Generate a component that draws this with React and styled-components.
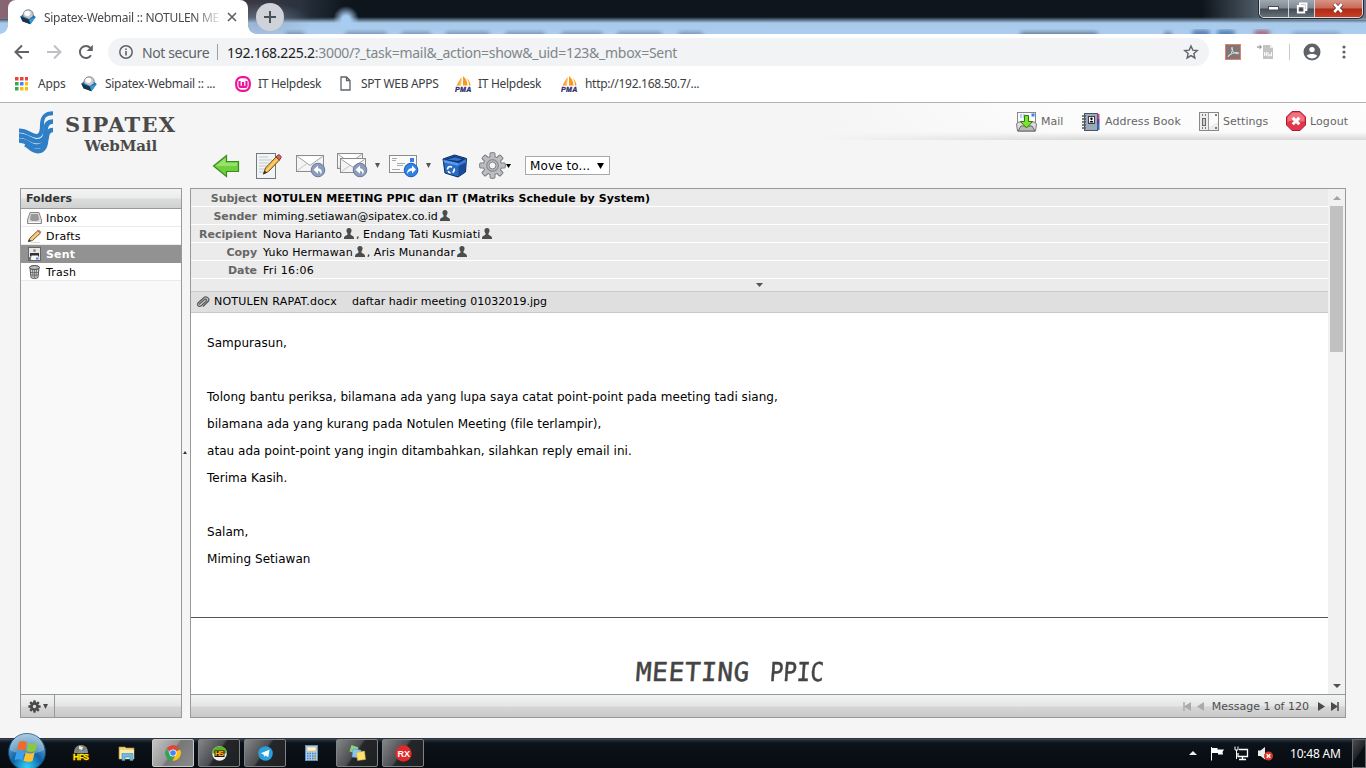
import React from "react";
import styled, { createGlobalStyle, css } from "styled-components";

const ui = `"Noto Sans", "Open Sans", sans-serif`;
const verdana = `"DejaVu Sans", Verdana, sans-serif`;

const Global = createGlobalStyle`
  * { box-sizing: border-box; }
  body { margin: 0; background: #f5f5f5; overflow: hidden; font-family: ${verdana}; font-size: 11px; color: #000; }
`;

const Screen = styled.div`
  width: 1366px;
  height: 768px;
  display: flex;
  flex-direction: column;
  overflow: hidden;
`;

const Text = styled.span`
  white-space: pre;
  letter-spacing: ${(p) => p.$ls || 0}px;
`;

/* ---------- browser chrome ---------- */

const TabStrip = styled.div`
  height: 34px;
  flex: none;
  display: flex;
  position: relative;
  background:
    linear-gradient(to right, transparent 88%, rgba(120, 135, 150, 0.75) 93%, rgba(170, 185, 200, 0.6)) 0 0 / 100% 20px no-repeat,
    radial-gradient(ellipse 13px 14px at 346px 20px, #a9cdf2 30%, transparent),
    radial-gradient(ellipse 50px 20px at 262px 22px, rgba(140, 160, 185, 0.6), transparent),
    linear-gradient(to right, rgba(150, 110, 125, 0.9) 0, rgba(100, 85, 98, 0.55) 240px, rgba(60, 70, 85, 0.6) 300px, transparent 345px) 0 0 / 100% 19px no-repeat,
    linear-gradient(#0f161d 0, #0d151c 17px, #5d7388 20px, #a8c9ea 23px, #abcdef 34px);
`;

const GlassBlur = styled.div`
  position: absolute;
  left: 270px;
  right: 0;
  bottom: 0;
  height: 5px;
  overflow: hidden;
`;

const Smudge = styled.i`
  position: absolute;
  left: ${(p) => p.$x - 270}px;
  top: ${(p) => p.$y ?? 3}px;
  width: ${(p) => p.$w}px;
  height: 7px;
  border-radius: 4px;
  opacity: 0.7;
  background: ${(p) => p.$c || "#5f7894"};
  filter: blur(2px);
`;

const Tab = styled.div`
  position: relative;
  width: 240px;
  height: 34px;
  margin-left: 8px;
  background: #fff;
  border-radius: 8px 8px 0 0;
  display: flex;
  align-items: center;
  padding-left: 12px;
  font: 12px ${ui};
  color: #45494d;
  &::before, &::after {
    content: "";
    position: absolute;
    bottom: 0;
    width: 8px;
    height: 8px;
  }
  &::before { left: -8px; background: radial-gradient(circle at 0 0, transparent 7.5px, #fff 8px); }
  &::after { right: -8px; background: radial-gradient(circle at 100% 0, transparent 7.5px, #fff 8px); }
  svg { flex: none; }
`;

const TabTitle = styled.div`
  width: 175px;
  margin: 0 8px 0 8px;
  white-space: nowrap;
  letter-spacing: ${(p) => p.$ls}px;
  mask-image: linear-gradient(to right, #000 150px, transparent 179px);
`;

const NewTab = styled.div`
  width: 28px;
  height: 28px;
  margin: 3px 0 0 8px;
  border-radius: 50%;
  background: #cfd2d8;
  display: flex;
  align-items: center;
  justify-content: center;
`;

const WindowButtons = styled.div`
  position: absolute;
  right: 3px;
  top: -2px;
  height: 20px;
  width: 104px;
  display: flex;
  border: 1px solid #d9dee3;
  border-radius: 0 0 5px 5px;
  box-shadow: 0 0 0 1px #222b35;
  overflow: hidden;
`;

const WinButton = styled.div`
  width: ${(p) => p.$w}px;
  display: flex;
  align-items: center;
  justify-content: center;
  border-right: 1px solid ${(p) => (p.$close ? "transparent" : "#cdd3d8")};
  background: ${(p) => (p.$close ? "linear-gradient(#d9998d 0, #c96a58 9px, #b02a14 10px, #d0432a 20px)" : "linear-gradient(#a3abb3 0, #808991 9px, #424b54 10px, #6f7983 20px)")};
`;

const AddressRow = styled.div`
  height: 36px;
  flex: none;
  background: #fff;
  display: flex;
  align-items: center;
  padding: 0 0 0 14px;
  svg { flex: none; }
`;

const NavIcons = styled.div`
  display: flex;
  gap: 16px;
  width: 94px;
`;

const Omnibox = styled.div`
  width: 1101px;
  height: 28px;
  border-radius: 14px;
  background: #f1f3f4;
  display: flex;
  align-items: center;
  padding: 0 10px 0 11px;
  font: 14px ${ui};
  color: #80868b;
  b { font-weight: 400; color: #202124; }
`;

const NotSecure = styled.span`
  width: 75px;
  margin-left: 9px;
  color: #5f6368;
  letter-spacing: ${(p) => p.$ls}px;
  white-space: nowrap;
`;

const Divider = styled.i`
  width: 1px;
  height: 16px;
  background: ${(p) => p.$c || "#9aa0a6"};
`;

const Url = styled.span`
  flex: 1;
  margin-left: 9px;
  letter-spacing: ${(p) => p.$ls}px;
  white-space: nowrap;
`;

const Extensions = styled.div`
  flex: 1;
  display: flex;
  align-items: center;
  padding-left: 16px;
`;

const Bookmarks = styled.div`
  height: 33px;
  flex: none;
  background: #fff;
  border-bottom: 1px solid #b2b2b2;
  display: flex;
  align-items: center;
  padding: 0 0 5px 13px;
  font: 12px ${ui};
  color: #3c4043;
`;

const Bookmark = styled.div`
  width: ${(p) => p.$w}px;
  display: flex;
  align-items: center;
  gap: ${(p) => p.$gap || 8}px;
  white-space: nowrap;
  letter-spacing: ${(p) => p.$ls || 0}px;
  svg { flex: none; }
`;

/* ---------- webmail ---------- */

const Page = styled.main`
  height: 635px;
  flex: none;
  display: flex;
  flex-direction: column;
  background: #f5f5f5;
`;

const Header = styled.header`
  height: 85px;
  flex: none;
  display: flex;
  background:
    linear-gradient(to right, #f5f5f5 0, rgba(245, 245, 245, 0) 260px) right 0 top 0 / 550px 37px no-repeat,
    linear-gradient(#fdfdfd 0, #fbfbfb 29px, #d9d9d9 37px) right 0 top 0 / 550px 37px no-repeat,
    #f5f5f5;
`;

const Brand = styled.div`
  width: 191px;
  display: flex;
  padding: 7px 0 0 18px;
  gap: 11px;
`;

const BrandText = styled.div`
  display: flex;
  flex-direction: column;
  align-items: center;
  padding-top: 3px;
  font-family: "DejaVu Serif", serif;
  font-weight: 700;
  color: #4a4a4a;
  height: 50px;
`;

const BrandName = styled.div`
  font-size: 21px;
  line-height: 23px;
  letter-spacing: ${(p) => p.$ls}px;
`;

const BrandSub = styled.div`
  font-size: 15px;
  line-height: 20px;
  letter-spacing: -0.1px;
`;

const HeaderMain = styled.div`
  flex: 1;
  display: flex;
  flex-direction: column;
`;

const TaskNav = styled.nav`
  height: 37px;
  display: flex;
  justify-content: flex-end;
  color: #666;
`;

const TaskLink = styled.div`
  width: ${(p) => p.$w}px;
  display: flex;
  align-items: center;
  gap: ${(p) => p.$gap}px;
  letter-spacing: ${(p) => p.$ls || 0}px;
  white-space: nowrap;
`;

const Toolbar = styled.div`
  height: 48px;
  display: flex;
  align-items: center;
  padding: 3px 0 0 21px;
`;

const Tool = styled.div`
  width: ${(p) => p.$w}px;
  height: 30px;
  display: flex;
  align-items: center;
`;

const MoveSelect = styled.div`
  width: 85px;
  height: 19px;
  border: 1px solid #a9a9a9;
  background: #fff;
  display: flex;
  align-items: center;
  justify-content: space-between;
  padding: 0 5px 0 4px;
  white-space: nowrap;
  font-size: 12px;
  letter-spacing: 0.1px;
`;

const Panels = styled.div`
  height: 530px;
  display: flex;
  padding: 0 20px;
`;

const frame = css`
  border: 1px solid #999;
  display: flex;
  flex-direction: column;
`;

const FolderPanel = styled.aside`
  width: 162px;
  ${frame}
  background: #f9f9f9;
`;

const PanelTitle = styled.div`
  height: 20px;
  border-bottom: 1px solid #999;
  background: linear-gradient(#f4f4f4, #eaebeb 9px, #dcdddd 10px, #cfd0d0);
  padding-left: 5px;
  line-height: 19px;
  font-weight: 700;
  color: #333;
  letter-spacing: 0.05px;
`;

const Folder = styled.div`
  height: 18px;
  display: flex;
  align-items: center;
  gap: 4px;
  padding-left: 6px;
  background: ${(p) => (p.$on ? "#929292" : "#fff")};
  border-bottom: 1px solid ${(p) => (p.$on ? "#929292" : "#ebebeb")};
  font-weight: ${(p) => (p.$on ? 700 : 400)};
  color: ${(p) => (p.$on ? "#fff" : "#000")};
  letter-spacing: 0.2px;
  span { padding-top: 2px; }
`;

const Footer = styled.div`
  height: 23px;
  flex: none;
  margin-top: auto;
  border-top: 1px solid #999;
  background: linear-gradient(#f2f3f3, #e4e5e5 11px, #d6d6d6 12px, #c8c8c8);
  display: flex;
  align-items: center;
  justify-content: ${(p) => (p.$end ? "flex-end" : "flex-start")};
  color: #4d4d4d;
  padding-right: ${(p) => (p.$end ? 6 : 0)}px;
`;

const FooterButton = styled.div`
  width: 34px;
  height: 22px;
  border-right: 1px solid #999;
  display: flex;
  align-items: center;
  padding: 1px 0 0 7px;
`;

const Splitter = styled.div`
  width: 8px;
  display: flex;
  align-items: center;
  padding: 0 0 2px 1px;
`;

const MailPanel = styled.section`
  flex: 1;
  ${frame}
  background: #fff;
`;

const MailView = styled.div`
  flex: 1;
  min-height: 0;
  display: flex;
`;

const Message = styled.article`
  flex: 1;
  min-width: 0;
  overflow: hidden;
`;

const HeaderLine = styled.div`
  height: 18px;
  display: flex;
  align-items: center;
  background: #ebebeb;
  border-bottom: 1px solid #fff;
  padding-top: 2px;
  font-weight: ${(p) => (p.$bold ? 700 : 400)};
`;

const HeaderName = styled.div`
  width: 66px;
  margin-right: 6px;
  text-align: right;
  font-weight: 700;
  color: #666;
  letter-spacing: -0.06px;
`;

const HeaderValue = styled.div`
  display: flex;
  align-items: center;
  white-space: pre;
  svg { margin: -3px 2px 0 2px; }
`;

const Expander = styled.div`
  height: 12px;
  background: #ebebeb;
  display: flex;
  align-items: center;
  justify-content: center;
`;

const Attachments = styled.div`
  height: 22px;
  background: #dfdfdf;
  border: 1px solid #c9c9c9;
  border-width: 1px 0;
  display: flex;
  align-items: center;
  padding: 0 0 2px 5px;
  svg { margin: 2px 3px 0 0; }
`;

const Attachment = styled.span`
  width: ${(p) => p.$w}px;
  letter-spacing: ${(p) => p.$ls || 0}px;
  white-space: nowrap;
`;

const MailBody = styled.div`
  height: 305px;
  padding: 17px 16px 0;
  border-bottom: 1px solid #555;
  font-size: 12px;
  p { margin: 0; height: 27px; line-height: 27px; white-space: nowrap; }
`;

const Line = styled.p`
  letter-spacing: 0.04px;
`;

const ScanTitle = styled.div`
  display: flex;
  gap: 20px;
  margin: 37px 0 0 445px;
  font: 26px/34px "DejaVu Sans Mono", monospace;
  color: #444;
  -webkit-text-stroke: 0.5px #444;
  transform: skewX(-4deg);
`;

const ScanWord = styled.span`
  letter-spacing: ${(p) => p.$ls || 0}px;
  transform: scaleX(${(p) => p.$stretch || 1});
  transform-origin: left;
`;

const ScrollBar = styled.div`
  width: 17px;
  background: #f1f1f1;
  display: flex;
  flex-direction: column;
  align-items: center;
`;

const ScrollButton = styled.div`
  height: 17px;
  display: flex;
  align-items: center;
`;

const ScrollThumb = styled.div`
  width: 13px;
  height: 146px;
  background: #c1c1c1;
  margin-bottom: auto;
`;

const Pager = styled.div`
  display: flex;
  align-items: center;
  gap: 6px;
  span { margin: 0 3px 0 2px; }
`;

/* ---------- taskbar ---------- */

const Taskbar = styled.footer`
  height: 30px;
  flex: none;
  position: relative;
  display: flex;
  background: linear-gradient(#0a121a 0, #4a5865 1px, #232d37 2px, #0c1219 5px, #070b12 30px);
`;

const StartOrb = styled.div`
  position: relative;
  width: 58px;
  svg { position: absolute; left: 7px; top: -6px; }
`;

const Slot = styled.div`
  width: 46px;
  height: 30px;
  padding: 1px 2px 2px;
`;

const TaskButton = styled.div`
  width: 42px;
  height: 28px;
  display: flex;
  align-items: center;
  justify-content: center;
  border-radius: 2px;
  ${(p) => p.$state && css`
    border: 1px solid ${p.$state === "active" ? "#c8c8c8" : "#7f8183"};
    background: ${p.$state === "active"
      ? "linear-gradient(125deg, #c4c4c4 0, #989898 45%, #777 50%, #8a8a8a)"
      : "linear-gradient(125deg, #858688 0, #4b4d50 45%, #242629 50%, #1e2022)"};
  `}
`;

const Tray = styled.div`
  margin-left: auto;
  display: flex;
  align-items: center;
  color: #fff;
  font: 12px ${ui};
  svg { flex: none; }
`;

const Clock = styled.div`
  width: 62px;
  letter-spacing: ${(p) => p.$ls}px;
  white-space: nowrap;
`;

const ShowDesktop = styled.div`
  width: 14px;
  height: 29px;
  align-self: flex-end;
  border: 1px solid #64696e;
  background: linear-gradient(125deg, #4b4f54, #1d2125 50%, #0b0e12 52%);
`;

/* ---------- icons ---------- */

const Caret = ({ w = 6, h = 4, c = "#555", up, mr = 0, ml = 0 }) => (
  <svg width={w + ml + mr} height={h} viewBox={`${-ml} 0 ${w + ml + mr} ${h}`}>
    <path d={up ? `M0 ${h}L${w / 2} 0L${w} ${h}Z` : `M0 0H${w}L${w / 2} ${h}Z`} fill={c} />
  </svg>
);

const CubeIcon = () => (
  <svg width="16" height="16" viewBox="0 0 16 16">
    <path d="M.3 7.500L5 4h6l4.700 4-5.200 7.200L2.500 12z" fill="#1a6cab" />
    <path d="M.3 7.500L9 10.500l1.500 4.700L2.500 12.500z" fill="#17354f" />
    <path d="M9 10.500L15.700 8l-5.200 7.200z" fill="#2f9bdc" />
    <path d="M3 7.500C2.500 3.500 5 .8 8.300.8S14 3.500 13 7.500L9 10.300z" fill="#c3c9ce" stroke="#5d676f" strokeWidth=".7" />
    <ellipse cx="7.300" cy="4.300" rx="3" ry="2.600" fill="#fff" />
  </svg>
);

const BackIcon = ({ flip, c = "#5f6368" }) => (
  <svg width="16" height="16" viewBox="0 0 16 16">
    <path
      d={flip ? "M1 8H13.500M8 1.500L14.500 8 8 14.500" : "M15 8H2.500M8 1.500L1.500 8 8 14.500"}
      fill="none" stroke={c} strokeWidth="2"
    />
  </svg>
);

const ReloadIcon = () => (
  <svg width="16" height="16" viewBox="0 0 16 16">
    <path d="M13 11.200A6 6 0 1 1 12.400 4" fill="none" stroke="#5f6368" strokeWidth="2" />
    <path d="M14.800.800V7H8.600z" fill="#5f6368" />
  </svg>
);

const InfoIcon = () => (
  <svg width="14" height="14" viewBox="0 0 14 14">
    <circle cx="7" cy="7" r="6.200" fill="none" stroke="#5f6368" strokeWidth="1.500" />
    <path d="M7 6v4.500M7 3.400v1.600" stroke="#5f6368" strokeWidth="1.600" />
  </svg>
);

const StarIcon = () => (
  <svg width="16" height="16" viewBox="0 0 24 24">
    <path d="M12 3l2.700 6.200 6.700.6-5.100 4.500 1.500 6.600L12 17.400l-5.800 3.500 1.500-6.600-5.100-4.500 6.700-.6z" fill="none" stroke="#5f6368" strokeWidth="2.100" />
  </svg>
);

const PdfIcon = () => (
  <svg width="16" height="16" viewBox="0 0 16 16">
    <rect x=".5" y=".5" width="15" height="15" fill="#7f7775" stroke="#e67f70" />
    <path d="M3 12.500c2.500-1 4.800-4.700 4.600-8.300-.1-1.500-1.300-1.200-1 .4.600 3 3.600 5.500 6.600 5.100 1.200-.3.500-1.500-1-1.300-3.200.2-6 1.400-8.700 3.300z" fill="none" stroke="#ddd" strokeWidth="1" />
  </svg>
);

const DocIcon = () => (
  <svg width="17" height="16" viewBox="0 0 17 16">
    <path d="M6 1h7l3 3v11H6z" fill="#c3c3c3" />
    <path d="M13 1v3h3" fill="#eee" />
    <path d="M0 3h4M2.500 1.200L4.500 3 2.500 4.800" stroke="#777" fill="none" />
    <path d="M7.500 8v4M9.500 8v4M7.500 10h2M11 8v4h1l1-2 1 2h.5V8" stroke="#f7f7f7" fill="none" />
  </svg>
);

const UserIcon = () => (
  <svg width="18" height="18" viewBox="0 0 18 18">
    <circle cx="9" cy="9" r="8.500" fill="#5f6368" />
    <circle cx="9" cy="6.600" r="2.700" fill="#fff" />
    <path d="M3.800 12.800c1-2 8.400-2.600 10.400 0-2 3.400-8.200 3.600-10.400 0z" fill="#fff" />
  </svg>
);

const DotsIcon = () => (
  <svg width="4" height="14" viewBox="0 0 4 14" fill="#5f6368">
    <circle cx="2" cy="2" r="1.600" /><circle cx="2" cy="7" r="1.600" /><circle cx="2" cy="12" r="1.600" />
  </svg>
);

const AppsIcon = () => (
  <svg width="15" height="14" viewBox="0 0 15 14">
    {["#ea4335", "#ea4335", "#ea4335", "#34a853", "#4285f4", "#fbbc05", "#34a853", "#fbbc05", "#fbbc05"].map((c, i) => (
      <rect key={i} x={2 + (i % 3) * 5} y={Math.floor(i / 3) * 5} width="3.500" height="3.500" fill={c} />
    ))}
  </svg>
);

const WampIcon = () => (
  <svg width="16" height="16" viewBox="0 0 16 16">
    <rect x="1.200" y="1.200" width="13.600" height="13.600" rx="5.500" fill="#fff" stroke="#f0149b" strokeWidth="2.200" />
    <path d="M4.500 5v4.500c0 2 3.500 2 3.500 0V6v3.500c0 2 3.500 2 3.500 0V5" fill="none" stroke="#f0149b" strokeWidth="2.200" />
  </svg>
);

const FileIcon = () => (
  <svg width="11" height="15" viewBox="0 0 11 15">
    <path d="M1 1h5.500L10 4.500V14H1zM6.500 1v3.500H10" fill="#fff" stroke="#5f6368" strokeWidth="1.300" />
  </svg>
);

const PmaIcon = () => (
  <svg width="17" height="17" viewBox="0 0 17 17">
    <path d="M6.500 2L1.500 10.500h4.500zM8 1v9.500h4.500C12.500 6 10.500 3 8 1zM11.500 3c1.500 2 2.500 4.500 2.500 7.500h1.500C15.300 7.500 14 5 11.500 3z" fill="#f79a1f" />
    <path d="M6.500 2L3.800 10.500H6z" fill="#fbc069" />
    <text x="0" y="16.500" fontSize="7" fontWeight="700" fontStyle="italic" fontFamily="Liberation Sans" fill="#2c2c6c" stroke="#2c2c6c" strokeWidth=".3" textLength="16">PMA</text>
  </svg>
);

const Logo = () => (
  <svg width="36" height="44" viewBox="0 0 36 44">
    <g fill="none" stroke="#2f7fc6">
      <path strokeWidth="4" d="M1 20.500C10 20.500 13 26 18.500 26C23.500 26 24 21 24 15C24 6.500 27 3.200 35 3.200" />
      <path strokeWidth="4.600" d="M1 25.500C10 25.500 12.500 31.300 18.500 31.300C26 31.300 27.500 27 27.500 21C27.500 14.500 30 11.500 35 11.500" />
      <path strokeWidth="4.600" d="M1 30.500C10 30.500 12 36.500 18.500 36.500C26.500 36.500 28.300 31 28.800 27C29.200 22.500 31.500 20 35 20" />
      <path strokeWidth="4.400" d="M7 34.500C11 36 14 41.200 19.500 41.200C25 41.200 27.500 37 28.200 31" />
    </g>
  </svg>
);

const NavMailIcon = () => (
  <svg width="21" height="22" viewBox="0 0 21 22">
    <rect x="1.500" y="1.500" width="18" height="11" fill="#fafafa" stroke="#888" />
    <path d="M4 4h5M4 6h4" stroke="#7ba5dd" strokeDasharray="2 1" />
    <rect x="15.500" y="2.500" width="3" height="3" fill="#3f7fee" />
    <path d="M.5 13l2-2h16l2 2-1 7h-18z" fill="#ddd" stroke="#777" />
    <path d="M2 20l3-5h11l3 5z" fill="#b9bab8" stroke="#666" />
    <path d="M8.500 4.500h4v6h4L10.500 17l-6-6.500h4z" fill="#7be52d" stroke="#2c7a10" />
  </svg>
);

const BookIcon = () => (
  <svg width="19" height="20" viewBox="0 0 19 20">
    <rect x="3.500" y="1.500" width="13" height="17" fill="#99aabd" stroke="#4a5563" />
    <rect x="16.500" y="2" width="2" height="5" fill="#c7468b" /><rect x="16.500" y="7" width="2" height="5" fill="#6d3aa8" /><rect x="16.500" y="12" width="2" height="6" fill="#3273b8" />
    <rect x="7.500" y="4.500" width="6" height="7" fill="#fff" stroke="#394049" />
    <circle cx="10.500" cy="6.800" r="1.200" /><path d="M8.500 10.500c.5-2.500 3.500-2.500 4 0z" />
    <path d="M1 4h4M1 7h4M1 10h4M1 13h4M1 16h4" stroke="#555" strokeWidth="1.300" />
  </svg>
);

const SwitchIcon = () => (
  <svg width="20" height="19" viewBox="0 0 20 19">
    <rect x=".5" y=".5" width="19" height="18" fill="#ececec" stroke="#888" />
    <path d="M9.500 1v17" stroke="#999" />
    <path d="M10 1h9v9l-9 5z" fill="#fbfbfb" />
    <rect x="3.500" y="6.500" width="3" height="7" fill="#ccc" stroke="#666" />
    <path d="M3 3h1M6 3h1M3 16h1M6 16h1M16 3h2M16 16h2" stroke="#555" strokeWidth="1.500" />
  </svg>
);

const LogoutIcon = () => (
  <svg width="20" height="21" viewBox="0 0 20 21">
    <path d="M6 .5h8L19.500 6v8L14 19.500H6L.5 14V6z" fill="#e0364b" stroke="#a81f31" />
    <path d="M6.500 1.500h7L18.500 6.500V10C13 12 7 8 1.500 11V6.500z" fill="#f0727e" />
    <path d="M6.700 6.700l6.600 6.600M13.300 6.700l-6.600 6.600" stroke="#fff" strokeWidth="3" />
  </svg>
);

const ArrowIcon = () => (
  <svg width="28" height="24" viewBox="0 0 28 24">
    <path d="M1.500 12L14.500 1.500V7.500H26.500V17.500H14.500V22.500z" fill="#6fcf3c" stroke="#3a8b22" strokeWidth="1.200" />
    <path d="M3.500 12L13.500 4v5H25v3z" fill="#98e26c" />
  </svg>
);

const ComposeIcon = () => (
  <svg width="27" height="28" viewBox="0 0 27 28">
    <rect x="1.500" y="1.500" width="19" height="25" fill="#f1f3f5" stroke="#717880" />
    <path d="M4 5h9M4 8h13M4 11h10M4 14h9M4 17h7M4 20h5" stroke="#c3c8cd" />
    <path d="M8.500 22l2-6L21 5l3.500 3L13.500 19.500z" fill="#f7bc43" stroke="#6b5023" />
    <path d="M21 5l2-2c1-1 4 1.500 3 2.700L24.500 8z" fill="#dc6565" stroke="#8b3434" />
    <path d="M8 22.500l1.500-4 2.500 2.300z" fill="#333" />
    <path d="M11 19L22 7.500" stroke="#fde3a0" />
  </svg>
);

const Badge = ({ x, y, fwd }) => (
  <g transform={`translate(${x} ${y})`}>
    <circle cx="7" cy="7" r="6.800" fill={fwd ? "#2f82e4" : "#8b9dbd"} stroke={fwd ? "#1b5cb3" : "#6a7b99"} />
    {fwd
      ? <path d="M3.200 11C2.800 7 5 5.200 8 5.200V2.500L12 6.600 8 10.500V7.800C6 7.700 4.200 8.500 3.200 11z" fill="#fff" />
      : <path d="M9.500 11.500C12 9 10.500 5.500 7 5.200V2.500L2.500 6.800 7 10.800V8C8.800 8 9.800 9.300 9.500 11.500z" fill="#fff" />}
  </g>
);

const Envelope = ({ x, y, w = 27, h = 16 }) => (
  <g transform={`translate(${x} ${y})`}>
    <rect width={w} height={h} fill="#f4f4f4" stroke="#8c8c8c" />
    <path d={`M1 ${h - 1}L${w * 0.38} ${h * 0.5}M${w - 1} ${h - 1}L${w * 0.62} ${h * 0.5}`} stroke="#c5c5c5" />
    <path d={`M1 1L${w / 2} ${h * 0.62}L${w - 1} 1`} fill="#fff" stroke="#a0a0a0" />
  </g>
);

const ReplyIcon = () => (
  <svg width="30" height="24" viewBox="0 0 30 24"><Envelope x={0.5} y={1.5} /><Badge x={15} y={9} /></svg>
);

const ReplyAllIcon = () => (
  <svg width="31" height="25" viewBox="0 0 31 25"><Envelope x={0.5} y={0.5} w={25} h={15} /><Envelope x={3.5} y={5.5} w={25} h={14} /><Badge x={16} y={10} /></svg>
);

const ForwardIcon = () => (
  <svg width="30" height="24" viewBox="0 0 30 24">
    <rect x=".5" y="1.500" width="27" height="17" fill="#fafafa" stroke="#8c8c8c" />
    <path d="M3 4.500h5M3 6.500h4M8 9.500h8M8 11.500h6M3 15.500h8" stroke="#aaa" />
    <rect x="21" y="4" width="4" height="4" fill="#3b7ced" />
    <Badge x={15} y={9} fwd />
  </svg>
);

const BinIcon = () => (
  <svg width="26" height="24" viewBox="0 0 26 24">
    <path d="M1 5L12.500 1 24.500 4.500 23.500 18l-7.500 5L3 19z" fill="#2a6bc4" stroke="#0b2a5c" />
    <path d="M2 5.500L12.500 2l11 3-7 4z" fill="#0d3576" />
    <path d="M5 5.500l8-2.300 7 2-4 1.800z" fill="#3274ca" />
    <path d="M1.500 6L16.500 9.200v2.500L1.800 8.500z" fill="#5b9bea" />
    <path d="M16.500 9.300L24 5.500v3l-7.500 4z" fill="#3b7bd0" />
    <path d="M16.500 12L23.700 8.500 23 17.500l-6.500 4.800z" fill="#18499a" />
    <path d="M5.500 15.500a3 3 0 0 1 3-3l1.500.8M12 14.500a3 3 0 0 1-1.500 4M8.500 19a3 3 0 0 1-2.300-2" fill="none" stroke="#fff" strokeWidth="1.700" />
  </svg>
);

const Gear = ({ s = 27, fill = "#bcbec2", stroke = "#77797d", hole = "#f5f5f5", sw = 1 }) => (
  <svg width={s} height={s} viewBox="-14 -14 28 28">
    {[0, 45, 90, 135].map((a) => (
      <rect key={a} x="-2.600" y="-13.300" width="5.200" height="26.600" rx="1" fill={fill} stroke={stroke} strokeWidth={sw} transform={`rotate(${a})`} />
    ))}
    <circle r="9.500" fill={fill} stroke={stroke} strokeWidth={sw} />
    {[0, 45, 90, 135].map((a) => (
      <rect key={a} x="-2" y="-10.500" width="4" height="21" fill={fill} transform={`rotate(${a})`} />
    ))}
    {sw > 0 && <circle r="6" fill="none" stroke="#8f9196" strokeWidth="1.500" />}
    <circle r="3.600" fill={hole} stroke={stroke} strokeWidth={sw} />
  </svg>
);

const InboxIcon = () => (
  <svg width="15" height="14" viewBox="0 0 15 14">
    <path d="M3 1.500h9L14.500 9v3.500H.5V9z" fill="#ddd" stroke="#888" />
    <path d="M4 3h7l1.200 5.500-2 1.500H5L2.800 8.500z" fill="#999" />
    <path d="M2 11.500h11" stroke="#fff" />
  </svg>
);

const PencilIcon = () => (
  <svg width="15" height="14" viewBox="0 0 15 14">
    <path d="M1.500 12.500L3 9l8-7.500L13.500 4 5.500 11.500z" fill="#f3cb7a" stroke="#735a34" />
    <path d="M1 13l1-3 2 2z" fill="#333" />
    <path d="M10.500 2L12 .8 14.300 3 13 4.500z" fill="#c9705b" />
    <path d="M4 13.500h9" stroke="#ddd" />
  </svg>
);

const SentIcon = () => (
  <svg width="15" height="14" viewBox="0 0 15 14">
    <rect x="1.500" y=".5" width="12" height="13" fill="#e8e8e8" stroke="#666" />
    <circle cx="7.500" cy="3.500" r="1.500" fill="#999" />
    <path d="M3 6h9v3.500H3z" fill="#333" /><path d="M4.500 8.500h6.500V13H4.500z" fill="#f9f9f9" />
    <path d="M2 10h2v3H2z" fill="#777" />
    <rect x="9" y="10.500" width="2.500" height="2" fill="#4b88dd" />
  </svg>
);

const TrashIcon = () => (
  <svg width="15" height="14" viewBox="0 0 15 14">
    <path d="M3 3l1 9.500c1 1.300 6 1.300 7 0L12 3z" fill="#d2d2d2" stroke="#555" />
    <ellipse cx="7.500" cy="2.500" rx="5" ry="2" fill="#bbb" stroke="#444" />
    <path d="M5.500 5l.5 7M7.500 5v8M9.500 5L9 12M4 7.500h7M4 10h7" stroke="#666" strokeWidth=".8" />
  </svg>
);

const ContactIcon = () => (
  <svg width="10" height="11" viewBox="0 0 10 11">
    <path d="M5 0C7 0 7.800 1.500 7.500 3.200 7.300 4.500 6.500 5 6.400 6 6.400 7.500 10 7.500 10 10.200V11H0v-.8C0 7.500 3.600 7.500 3.600 6 3.500 5 2.700 4.500 2.500 3.200 2.200 1.500 3 0 5 0z" fill="#4c4c4c" />
  </svg>
);

const ClipIcon = () => (
  <svg width="15" height="13" viewBox="0 0 15 13">
    <path d="M3 8.500L8.500 3.500C10 2.300 11.500 3.800 10.200 5L5.500 9.500C3.500 11.500.5 9.500 2 7L7.500 2C10-.500 14 2 12.500 5L7 10.500" fill="none" stroke="#5a5a5a" strokeWidth="1.300" />
  </svg>
);

const StepIcon = ({ back, bar, c }) => (
  <svg width={bar ? 8 : 7} height="9" viewBox={`0 0 ${bar ? 8 : 7} 9`}>
    <g transform={back ? `translate(${bar ? 8 : 7} 0) scale(-1 1)` : undefined}>
      <path d="M0 0L7 4.500 0 9z" fill={c} />
      {bar && <path d="M7 0v9" stroke={c} strokeWidth="1.500" />}
    </g>
  </svg>
);

const OrbIcon = () => (
  <svg width="40" height="40" viewBox="0 0 40 40">
    <defs>
      <radialGradient id="orb" cx=".5" cy=".9" r=".9">
        <stop offset="0" stopColor="#35d0f6" /><stop offset=".45" stopColor="#0d63a8" /><stop offset="1" stopColor="#8cb9d8" />
      </radialGradient>
    </defs>
    <circle cx="20" cy="20" r="18.500" fill="url(#orb)" stroke="#12466e" />
    <path d="M3 18a17 17 0 0 1 34 0c-8 5-26 5-34 0z" fill="#fff" opacity=".28" />
    <path d="M12 10c3-1.500 5-1 8 .3L18 18.500c-3-1.300-5.500-1.300-8-.3z" fill="#ef6a2b" />
    <path d="M21.200 11c3 1.300 6 1.300 9.300-.2L28.300 19c-3 1.500-6 1.200-9 0z" fill="#8dc63f" />
    <path d="M9.600 19.800c3-1.200 5.300-1 8 .2l-2.200 8.200c-2.800-1.200-5-1.200-8 0z" fill="#3f9fe8" />
    <path d="M18.700 20.500c3 1.300 6 1.300 9 0L25.500 29c-3 1.300-6 1-9-.3z" fill="#fdc02f" />
  </svg>
);

const HfsIcon = () => (
  <svg width="18" height="18" viewBox="0 0 18 18">
    <circle cx="9" cy="8" r="7" fill="#6f93b9" />
    <path d="M3 5c3-4 9-5 12-1l-3 3-4-1-3 3z" fill="#8a7b5a" /><path d="M7 2l4 1-1 3-3-1z" fill="#e9eef4" />
    <rect y="9" width="18" height="8.500" fill="#2a0c00" />
    <text x="1" y="16.300" fontSize="8.500" fontWeight="700" fontFamily="Liberation Sans" fill="#ffee00" stroke="#ffee00" strokeWidth=".3" textLength="16">HFS</text>
  </svg>
);

const ExplorerIcon = () => (
  <svg width="18" height="16" viewBox="0 0 18 16">
    <path d="M1 2h6l1 1h8v11H1z" fill="#f0d27a" stroke="#b99842" strokeWidth=".6" />
    <rect x="2" y="5" width="14" height="9" fill="#fbebaa" />
    <path d="M4 15.500V8.500h11v7h-3V12H7v3.500z" fill="#6bbbe8" stroke="#3f8cc0" strokeWidth=".6" />
  </svg>
);

const ChromeIcon = () => (
  <svg width="16" height="16" viewBox="-8 -8 16 16">
    <path d="M0 0L-6.500-4.200A7.700 7.700 0 0 1 7-3.500H0z" fill="#e54335" />
    <path d="M0 0L7-3.500A7.700 7.700 0 0 1-.6 7.700L3 1.500z" fill="#fbc116" />
    <path d="M0 0L-.6 7.700A7.700 7.700 0 0 1-6.500-4.200L-3 1.500z" fill="#2fa551" />
    <circle r="3.600" fill="#fff" /><circle r="2.800" fill="#4285f4" />
  </svg>
);

const HsIcon = () => (
  <svg width="15" height="15" viewBox="0 0 15 15">
    <circle cx="7.500" cy="7.500" r="7.300" fill="#f0f0ee" /><path d="M.2 7.500a7.300 7.300 0 0 1 14.600 0z" fill="#5bb025" />
    <rect x="2.500" y="4.500" width="10" height="6.500" fill="#1f1505" />
    <text x="3" y="10.400" fontSize="7" fontWeight="700" fontFamily="Liberation Sans" fill="#ffb01f" stroke="#ffb01f" strokeWidth=".2" textLength="9">HS</text>
  </svg>
);

const TelegramIcon = () => (
  <svg width="15" height="15" viewBox="0 0 15 15">
    <circle cx="7.500" cy="7.500" r="7.300" fill="#2aa1dc" />
    <path d="M2.800 7.300L11.500 3.800 10.200 11.200 7.500 9.500 6 10.800 5.700 8.500z" fill="#fff" />
  </svg>
);

const CalcIcon = () => (
  <svg width="13" height="16" viewBox="0 0 13 16">
    <rect x=".5" y=".5" width="12" height="15" fill="#a9d0ee" stroke="#5e93c0" />
    <rect x="2" y="2" width="9" height="4" fill="#fff6d8" stroke="#e4a94c" strokeWidth=".6" />
    <path d="M2 8.500h9M2 11h9M2 13.500h9" stroke="#4b81b3" strokeWidth="1.500" strokeDasharray="1.500 1" />
    <rect x="9.500" y="11" width="1.500" height="3" fill="#f28c1b" />
  </svg>
);

const NotesIcon = () => (
  <svg width="17" height="16" viewBox="0 0 17 16">
    <path d="M2.500 0l7 2.500-2 6-7-2z" fill="#8fd07f" /><path d="M4 4l8 1-1 8-8-1z" fill="#8cc4ee" stroke="#4d8ec4" strokeWidth=".5" />
    <path d="M7.500 7.500l8-1.500 1 8.500-8 1z" fill="#fce074" stroke="#d4ae2b" strokeWidth=".5" />
  </svg>
);

const RxIcon = () => (
  <svg width="17" height="17" viewBox="0 0 17 17">
    <circle cx="8.500" cy="8.500" r="8.200" fill="#e02a2a" />
    <text x="2.500" y="11.800" fontSize="9" fontWeight="700" fontFamily="Liberation Sans" fill="#fff" textLength="12.500">RX</text>
  </svg>
);

const FlagIcon = () => (
  <svg width="15" height="15" viewBox="0 0 15 15">
    <path d="M1.500 1v13.500" stroke="#fff" /><path d="M2 2h5.500v1.500H14L12.500 6l.5 2.500H8V7H2z" fill="#fff" />
  </svg>
);

const NetworkIcon = () => (
  <svg width="15" height="15" viewBox="0 0 15 15">
    <path d="M5 3.500h8.500v7H4V7" fill="none" stroke="#fff" strokeWidth="1.300" /><path d="M5 13.500h7M8.500 11v2" stroke="#fff" strokeWidth="1.300" />
    <path d="M1 .5v3.500h3V.5M2.500 4v9" fill="none" stroke="#fff" />
  </svg>
);

const VolumeIcon = () => (
  <svg width="15" height="15" viewBox="0 0 15 15">
    <path d="M0 4.500h2.500L7 1v12.500L2.500 10H0z" fill="#eee" />
    <circle cx="10.500" cy="10" r="4.500" fill="#d9362a" /><path d="M8.700 8.200l3.600 3.600M12.300 8.200l-3.600 3.600" stroke="#fff" strokeWidth="1.500" />
  </svg>
);

/* ---------- data ---------- */

const bookmarks = [
  { icon: <AppsIcon />, label: "Apps", w: 68, gap: 10, ls: -0.15 },
  { icon: <CubeIcon />, label: "Sipatex-Webmail :: ...", w: 154, ls: -0.28 },
  { icon: <WampIcon />, label: "IT Helpdesk", w: 105, gap: 7, ls: -0.3 },
  { icon: <FileIcon />, label: "SPT WEB APPS", w: 115, gap: 10, ls: -0.3 },
  { icon: <PmaIcon />, label: "IT Helpdesk", w: 106, gap: 6, ls: -0.3 },
  { icon: <PmaIcon />, label: "http://192.168.50.7/...", w: 160, gap: 7, ls: -0.3 },
];

const folders = [
  { icon: <InboxIcon />, label: "Inbox" },
  { icon: <PencilIcon />, label: "Drafts" },
  { icon: <SentIcon />, label: "Sent", on: true },
  { icon: <TrashIcon />, label: "Trash" },
];

const headers = [
  { name: "Sender", people: ["miming.setiawan@sipatex.co.id"], ls: 0 },
  { name: "Recipient", people: ["Nova Harianto", "Endang Tati Kusmiati"], ls: [0, 0.12] },
  { name: "Copy", people: ["Yuko Hermawan", "Aris Munandar"], ls: 0.12 },
];

const body = [
  "Sampurasun,",
  "",
  "Tolong bantu periksa, bilamana ada yang lupa saya catat point-point pada meeting tadi siang,",
  "bilamana ada yang kurang pada Notulen Meeting (file terlampir),",
  "atau ada point-point yang ingin ditambahkan, silahkan reply email ini.",
  "Terima Kasih.",
  "",
  "Salam,",
  "Miming Setiawan",
];

const tasks = [
  { icon: <HfsIcon /> },
  { icon: <ExplorerIcon /> },
  { icon: <ChromeIcon />, state: "active" },
  { icon: <HsIcon />, state: "open" },
  { icon: <TelegramIcon />, state: "open" },
  { icon: <CalcIcon /> },
  { icon: <NotesIcon />, state: "open" },
  { icon: <RxIcon />, state: "open" },
];

const smudges = [
  [285, 20], [345, 42], [401, 30], [445, 45], [505, 40], [561, 42], [617, 45], [678, 25],
  [1020, 78, "#46576b"], [1164, 8, "#46576b"], [1192, 18, "#2f5f9a", 1], [1217, 18, "#2f5f9a", 1], [1254, 16, "#a34253", 1], [1292, 48, "#6e8fb8"],
];

const Browser = () => (
  <>
    <TabStrip>
      <GlassBlur>
        {smudges.map(([x, w, c, y]) => <Smudge key={x} $x={x} $w={w} $c={c} $y={y} />)}
      </GlassBlur>
      <Tab>
        <CubeIcon />
        <TabTitle $ls={-0.28}>Sipatex-Webmail :: NOTULEN ME</TabTitle>
        <svg width="10" height="10" viewBox="0 0 10 10"><path d="M1 1l8 8M9 1L1 9" stroke="#5f6368" strokeWidth="1.700" /></svg>
      </Tab>
      <NewTab>
        <svg width="12" height="12" viewBox="0 0 12 12"><path d="M6 0v12M0 6h12" stroke="#4c5056" strokeWidth="2" /></svg>
      </NewTab>
      <WindowButtons>
        <WinButton $w={29}><svg width="11" height="5" viewBox="0 0 11 5"><rect x=".5" y=".5" width="10" height="3.500" fill="#fff" stroke="#444b55" /></svg></WinButton>
        <WinButton $w={27}>
          <svg width="12" height="12" viewBox="0 0 12 12"><path d="M4 3V1.500h6.500V8H9M1.800 4h6.500v6.500H1.800z" fill="none" stroke="#fff" strokeWidth="1.800" /><rect x="4" y="6" width="2" height="2.500" fill="#444b55" /></svg>
        </WinButton>
        <WinButton $w={47} $close><svg width="12" height="10" viewBox="0 0 12 10"><path d="M2 1l8 8M10 1L2 9" stroke="#5b2a26" strokeWidth="4" /><path d="M2.200 1l7.600 8M9.800 1L2.200 9" stroke="#fff" strokeWidth="2.600" /></svg></WinButton>
      </WindowButtons>
    </TabStrip>
    <AddressRow>
      <NavIcons><BackIcon /><BackIcon flip c="#bdc1c6" /><ReloadIcon /></NavIcons>
      <Omnibox>
        <InfoIcon />
        <NotSecure $ls={-0.4}>Not secure</NotSecure>
        <Divider />
        <Url $ls={-0.28}><b>192.168.225.2</b>:3000/?_task=mail&amp;_action=show&amp;_uid=123&amp;_mbox=Sent</Url>
        <StarIcon />
      </Omnibox>
      <Extensions>
        <Tool $w={32}><PdfIcon /></Tool>
        <Tool $w={32}><DocIcon /></Tool>
        <Tool $w={14}><Divider $c="#c6c8cb" /></Tool>
        <Tool $w={39}><UserIcon /></Tool>
        <DotsIcon />
      </Extensions>
    </AddressRow>
    <Bookmarks>
      {bookmarks.map((b, i) => (
        <Bookmark key={i} $w={b.w} $gap={b.gap} $ls={b.ls}>{b.icon}<span>{b.label}</span></Bookmark>
      ))}
    </Bookmarks>
  </>
);

const Webmail = () => (
  <Page>
    <Header>
      <Brand>
        <Logo />
        <BrandText>
          <BrandName $ls={1.3}>SIPATEX</BrandName>
          <BrandSub>WebMail</BrandSub>
        </BrandText>
      </Brand>
      <HeaderMain>
        <TaskNav>
          <TaskLink $w={65} $gap={4}><NavMailIcon />Mail</TaskLink>
          <TaskLink $w={118} $gap={5} $ls={0.1}><BookIcon />Address Book</TaskLink>
          <TaskLink $w={87} $gap={4}><SwitchIcon />Settings</TaskLink>
          <TaskLink $w={80} $gap={4} $ls={0.1}><LogoutIcon />Logout</TaskLink>
        </TaskNav>
        <Toolbar>
          <Tool $w={43}><ArrowIcon /></Tool>
          <Tool $w={41}><ComposeIcon /></Tool>
          <Tool $w={41}><ReplyIcon /></Tool>
          <Tool $w={38}><ReplyAllIcon /></Tool>
          <Tool $w={14}><Caret w={5} h={5} /></Tool>
          <Tool $w={37}><ForwardIcon /></Tool>
          <Tool $w={16}><Caret w={5} h={5} /></Tool>
          <Tool $w={37}><BinIcon /></Tool>
          <Tool $w={46}><Gear /><Caret w={5} h={4} c="#000" /></Tool>
          <MoveSelect>Move to...<Caret w={7} h={6} c="#000" /></MoveSelect>
        </Toolbar>
      </HeaderMain>
    </Header>
    <Panels>
      <FolderPanel>
        <PanelTitle>Folders</PanelTitle>
        {folders.map((f) => <Folder key={f.label} $on={f.on}>{f.icon}<span>{f.label}</span></Folder>)}
        <Footer>
          <FooterButton><Gear s={13} fill="#4a4a4a" stroke="#4a4a4a" hole="#ddd" sw={0} /><Caret w={5} h={5} c="#4a4a4a" ml={2} /></FooterButton>
        </Footer>
      </FolderPanel>
      <Splitter><Caret w={4} h={3} c="#333" up /></Splitter>
      <MailPanel>
        <MailView>
          <Message>
            <HeaderLine $bold><HeaderName>Subject</HeaderName><Text $ls={0.085}>NOTULEN MEETING PPIC dan IT (Matriks Schedule by System)</Text></HeaderLine>
            {headers.map((h) => (
              <HeaderLine key={h.name}>
                <HeaderName>{h.name}</HeaderName>
                <HeaderValue>
                  {h.people.map((p, i) => (
                    <React.Fragment key={p}>
                      {i > 0 && <span>{", "}</span>}
                      <Text $ls={Array.isArray(h.ls) ? h.ls[i] : h.ls}>{p}</Text>
                      <ContactIcon />
                    </React.Fragment>
                  ))}
                </HeaderValue>
              </HeaderLine>
            ))}
            <HeaderLine><HeaderName>Date</HeaderName><Text $ls={0.3}>Fri 16:06</Text></HeaderLine>
            <Expander><Caret w={7} h={4} c="#555" /></Expander>
            <Attachments>
              <ClipIcon />
              <Attachment $w={138} $ls={0.23}>NOTULEN RAPAT.docx</Attachment>
              <Attachment $ls={0.04}>daftar hadir meeting 01032019.jpg</Attachment>
            </Attachments>
            <MailBody>{body.map((l, i) => <Line key={i}>{l}</Line>)}</MailBody>
            <ScanTitle><ScanWord $ls={0.6}>MEETING</ScanWord><ScanWord $stretch={0.86}>PPIC</ScanWord></ScanTitle>
          </Message>
          <ScrollBar>
            <ScrollButton><Caret w={8} h={4} c="#a3a3a3" up /></ScrollButton>
            <ScrollThumb />
            <ScrollButton><Caret w={8} h={4} c="#505050" /></ScrollButton>
          </ScrollBar>
        </MailView>
        <Footer $end>
          <Pager>
            <StepIcon back bar c="#aaa" /><StepIcon back c="#aaa" />
            <Text>Message 1 of 120</Text>
            <StepIcon c="#4a4a4a" /><StepIcon bar c="#4a4a4a" />
          </Pager>
        </Footer>
      </MailPanel>
    </Panels>
  </Page>
);

export default function App() {
  return (
    <Screen>
      <Global />
      <Browser />
      <Webmail />
      <Taskbar>
        <StartOrb><OrbIcon /></StartOrb>
        {tasks.map((t, i) => <Slot key={i}><TaskButton $state={t.state}>{t.icon}</TaskButton></Slot>)}
        <Tray>
          <Tool $w={21}><Caret w={8} h={4} c="#eee" up /></Tool>
          <Tool $w={24}><FlagIcon /></Tool>
          <Tool $w={24}><NetworkIcon /></Tool>
          <Tool $w={32}><VolumeIcon /></Tool>
          <Clock $ls={-0.2}>10:48 AM</Clock>
          <ShowDesktop />
        </Tray>
      </Taskbar>
    </Screen>
  );
}
